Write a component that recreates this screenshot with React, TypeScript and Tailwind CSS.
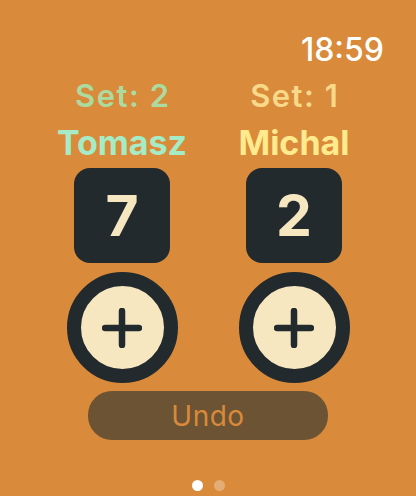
import React from "react";

const font = { fontFamily: "Inter, 'Noto Sans', sans-serif" };

function Plus() {
  return (
    <svg width="40" height="40" viewBox="0 0 40 40">
      <path d="M20 3 V37 M3 20 H37" stroke="#232A2E" strokeWidth="6.5" strokeLinecap="round" fill="none" />
    </svg>
  );
}

function Column({ set, name, score, setColor, nameColor }: { set: string; name: string; score: string; setColor: string; nameColor: string }) {
  return (
    <div className="flex flex-col items-center">
      <div className={`mt-[8px] pl-[1.5px] text-[31px] font-semibold leading-[36px] tracking-[1.5px] ${setColor}`}>{set}</div>
      <div className={`mt-[9px] text-[34px] font-bold leading-[40px] ${nameColor}`}>{name}</div>
      <div className="mt-[5px] flex h-[95px] w-[96px] items-center justify-center rounded-[16px] bg-[#232A2E]">
        <span className="text-[57px] font-bold leading-none text-[#F6E7C1]">{score}</span>
      </div>
      <div className="mt-[9px] flex h-[111px] w-[111px] items-center justify-center rounded-full border-[14px] border-[#232A2E] bg-[#F6E7C1]">
        <Plus />
      </div>
    </div>
  );
}

export default function App() {
  return (
    <div className="flex h-[496px] w-[416px] flex-col overflow-hidden bg-[#D98A3A]" style={font}>
      <div className="flex justify-end pr-[32px] pt-[30px]">
        <span className="text-[32px] font-medium leading-[40px] text-white">18:59</span>
      </div>
      <div className="grid grid-cols-2 px-[36px]">
        <Column set="Set: 2" name="Tomasz" score="7" setColor="text-[#ACDBA0]" nameColor="text-[#A5EBC6]" />
        <Column set="Set: 1" name="Michal" score="2" setColor="text-[#F8D98A]" nameColor="text-[#FFEA8E]" />
      </div>
      <div className="mt-[8px] flex justify-center">
        <div className="flex h-[49px] w-[240px] items-center justify-center rounded-[24px] bg-[#6C5333]">
          <span className="text-[28px] font-normal leading-none tracking-[0.5px] text-[#D98A3A]">Undo</span>
        </div>
      </div>
      <div className="mt-[40px] flex justify-center gap-[11px]">
        <div className="h-[11px] w-[11px] rounded-full bg-white" />
        <div className="h-[11px] w-[11px] rounded-full bg-white/30" />
      </div>
    </div>
  );
}
